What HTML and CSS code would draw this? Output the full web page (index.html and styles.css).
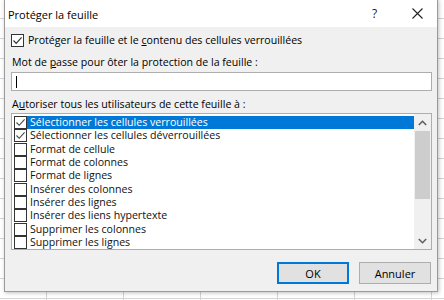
FILE: index.html
```html
<!DOCTYPE html>
<html lang="fr">
<head>
<meta charset="utf-8">
<title>Protéger la feuille</title>
<link rel="stylesheet" href="styles.css">
</head>
<body>
<div class="sheet">
  <div class="dialog">
    <div class="titlebar">
      <span class="title">Protéger la feuille</span>
      <span class="help">?</span>
      <span class="close">
        <svg width="11" height="11" viewBox="0 0 11 11"><path d="M0.5 0.5 L10.5 10.5 M10.5 0.5 L0.5 10.5" stroke="#222" stroke-width="1.1" fill="none"/></svg>
      </span>
    </div>
    <div class="content">
      <label class="check-row">
        <span class="box checked"><svg width="11" height="11" viewBox="0 0 11 11"><path d="M1.5 5.5 L4.2 8.3 L9.6 2.3" stroke="#333" stroke-width="1.2" fill="none"/></svg></span>
        <span>Protéger la feuille et le <u>c</u>ontenu des cellules verrouillées</span>
      </label>
      <div class="label pw">Mot de <u>p</u>asse pour ôter la protection de la feuille :</div>
      <div class="input"><span class="caret"></span></div>
      <div class="label allow">A<u>u</u>toriser tous les utilisateurs de cette feuille à :</div>
      <div class="list">
        <ul class="items">
          <li class="item selected"><span class="box sm"><svg width="11" height="11" viewBox="0 0 11 11"><path d="M1.5 5.5 L4.2 8.3 L9.6 2.3" stroke="#444" stroke-width="1.1" fill="none"/></svg></span><span class="txt">Sélectionner les cellules verrouillées</span></li>
          <li class="item"><span class="box sm"><svg width="11" height="11" viewBox="0 0 11 11"><path d="M1.5 5.5 L4.2 8.3 L9.6 2.3" stroke="#444" stroke-width="1.1" fill="none"/></svg></span><span class="txt">Sélectionner les cellules déverrouillées</span></li>
          <li class="item"><span class="box sm"></span><span class="txt">Format de cellule</span></li>
          <li class="item"><span class="box sm"></span><span class="txt">Format de colonnes</span></li>
          <li class="item"><span class="box sm"></span><span class="txt">Format de lignes</span></li>
          <li class="item"><span class="box sm"></span><span class="txt">Insérer des colonnes</span></li>
          <li class="item"><span class="box sm"></span><span class="txt">Insérer des lignes</span></li>
          <li class="item"><span class="box sm"></span><span class="txt">Insérer des liens hypertexte</span></li>
          <li class="item"><span class="box sm"></span><span class="txt">Supprimer les colonnes</span></li>
          <li class="item"><span class="box sm"></span><span class="txt">Supprimer les lignes</span></li>
        </ul>
        <div class="scrollbar">
          <div class="arrow"><svg width="9" height="6" viewBox="0 0 9 6"><path d="M0.8 5 L4.5 1.3 L8.2 5" stroke="#606060" stroke-width="1.6" fill="none"/></svg></div>
          <div class="track"><div class="thumb"></div></div>
          <div class="arrow"><svg width="9" height="6" viewBox="0 0 9 6"><path d="M0.8 1 L4.5 4.7 L8.2 1" stroke="#606060" stroke-width="1.6" fill="none"/></svg></div>
        </div>
      </div>
      <div class="buttons">
        <button class="btn default">OK</button>
        <button class="btn">Annuler</button>
      </div>
    </div>
  </div>
</div>
</body>
</html>
```
FILE: styles.css
```css
* { box-sizing: border-box; }
html, body { margin: 0; padding: 0; }
body {
  width: 444px;
  height: 300px;
  overflow: hidden;
  font-family: "Segoe UI", "Open Sans", "Noto Sans", sans-serif;
  font-size: 10.6px;
  color: #000;
}
.sheet {
  position: relative;
  width: 444px;
  height: 300px;
  background-color: #fff;
  background-image:
    linear-gradient(to right, #d4d4d4 1px, transparent 1px),
    linear-gradient(to bottom, #d4d4d4 1px, transparent 1px);
  background-size: 77px 20px, 77px 20px;
  background-position: 46px 0, 0 18px;
}
.dialog {
  position: absolute;
  left: 4px;
  top: -1px;
  width: 434px;
  height: 293px;
  background: #f0f0f0;
  border: 1px solid #9a9a9a;
  box-shadow: 1px 1px 4px rgba(0,0,0,0.25);
  display: flex;
  flex-direction: column;
}
.titlebar {
  height: 27px;
  background: #fff;
  display: flex;
  align-items: center;
  padding-left: 3px;
  flex: none;
}
.title { flex: 1; font-size: 11px; padding-top: 1px; }
.help { width: 20px; font-size: 12px; color: #222; margin-right: 20px; }
.close { width: 11px; margin-right: 14px; display: flex; }
.content {
  padding: 6px 5px 0 5px;
  display: flex;
  flex-direction: column;
  flex: 1;
}
.check-row {
  display: flex;
  align-items: center;
  gap: 4px;
  height: 14px;
  margin-left: 1px;
}
.box {
  width: 13px;
  height: 13px;
  border: 1px solid #333;
  background: #fff;
  display: flex;
  align-items: center;
  justify-content: center;
  flex: none;
}
.label { height: 14px; line-height: 14px; margin-left: 2px; }
.pw { margin-top: 8px; }
.input {
  margin-top: 3px;
  height: 19px;
  border: 1px solid #adadad;
  background: #fff;
  margin-left: 1px;
  padding: 3px 4px;
}
.caret { display: block; width: 1px; height: 12px; background: #000; }
.allow { margin-top: 6px; }
.list {
  margin-top: 2px;
  margin-left: 1px;
  height: 137px;
  border: 1px solid #adadad;
  background: #fff;
  display: flex;
}
.items {
  list-style: none;
  margin: 0;
  padding: 2px 0 0 2px;
  flex: 1;
}
.item {
  display: flex;
  align-items: center;
  height: 13.33px;
}
.box.sm {
  width: 13px;
  height: 13px;
  border-color: #333;
}
.txt {
  flex: 1;
  height: 13px;
  line-height: 13px;
  padding-left: 3px;
  color: #111;
}
.selected .txt { background: #0078d7; color: #fff; }
.scrollbar {
  width: 17px;
  background: #f0f0f0;
  display: flex;
  flex-direction: column;
  flex: none;
}
.arrow { height: 17px; display: flex; align-items: center; justify-content: center; flex: none; }
.track { flex: 1; padding: 0 1px; }
.thumb { height: 68px; background: #cdcdcd; }
.buttons {
  display: flex;
  justify-content: flex-end;
  gap: 10px;
  margin-top: 12px;
  padding-right: 1px;
}
.btn {
  width: 72px;
  height: 22px;
  font: inherit;
  font-size: 11px;
  background: #e1e1e1;
  border: 1px solid #adadad;
  color: #000;
  padding: 0;
}
.btn.default { border: 2px solid #0078d7; }
```
